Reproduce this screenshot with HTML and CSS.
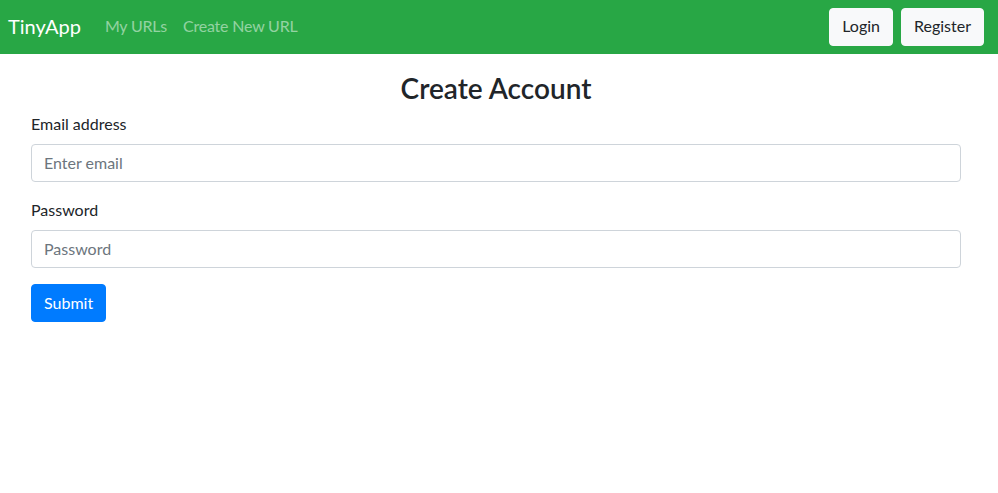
FILE: index.html
```html
<!DOCTYPE html>
<html lang="en">
<head>
<meta charset="utf-8">
<title>TinyApp</title>
<link rel="stylesheet" href="styles.css">
</head>
<body>
<nav class="navbar">
  <div class="nav-left">
    <a class="brand" href="#">TinyApp</a>
    <a class="nav-link" href="#">My URLs</a>
    <a class="nav-link" href="#">Create New URL</a>
  </div>
  <div class="nav-right">
    <button class="btn btn-light">Login</button>
    <button class="btn btn-light">Register</button>
  </div>
</nav>
<main class="container">
  <h3 class="title">Create Account</h3>
  <form class="form">
    <div class="form-group">
      <label for="email">Email address</label>
      <input id="email" class="form-control" type="email" placeholder="Enter email">
    </div>
    <div class="form-group">
      <label for="password">Password</label>
      <input id="password" class="form-control" type="password" placeholder="Password">
    </div>
    <button type="submit" class="btn btn-primary">Submit</button>
  </form>
</main>
</body>
</html>
```
FILE: styles.css
```css
* { box-sizing: border-box; }
html, body { margin: 0; padding: 0; }
body {
  font-family: "Lato", "Noto Sans", "Liberation Sans", sans-serif;
  font-size: 16px;
  line-height: 1.5;
  color: #212529;
  background: #fff;
}
.navbar {
  background: #28a745;
  height: 54px;
  padding: 0 14px 0 8px;
  display: flex;
  align-items: center;
  justify-content: space-between;
}
.nav-left { display: flex; align-items: center; margin-top: -2px; }
.brand {
  color: #fff;
  font-size: 20px;
  line-height: 30px;
  text-decoration: none;
  margin-right: 16px;
}
.nav-link {
  color: rgba(255,255,255,.5);
  text-decoration: none;
  padding: 8px;
  letter-spacing: -0.2px;
}
.nav-right { display: flex; gap: 8px; }
.nav-right .btn { padding-top: 5px; padding-bottom: 7px; }
.btn {
  font-family: inherit;
  font-size: 16px;
  line-height: 24px;
  padding: 6px 12px;
  border: 1px solid transparent;
  border-radius: 4px;
  cursor: pointer;
}
.btn-light { background: #f8f9fa; border-color: #f8f9fa; color: #212529; }
.btn-primary { background: #007bff; border-color: #007bff; color: #fff; }
.container { padding: 0 37px 0 31px; }
.title {
  margin: 18px 0 6px;
  font-size: 28px;
  font-weight: 600;
  line-height: 1.2;
  text-align: center;
}
.form-group { margin-bottom: 16px; }
label { display: block; margin-bottom: 8px; }
.form-control {
  display: block;
  width: 100%;
  height: 38px;
  padding: 6px 12px;
  font-family: inherit;
  font-size: 16px;
  line-height: 24px;
  color: #495057;
  border: 1px solid #ced4da;
  border-radius: 4px;
  background: #fff;
}
.form-control::placeholder { color: #6c757d; opacity: 1; }
```
